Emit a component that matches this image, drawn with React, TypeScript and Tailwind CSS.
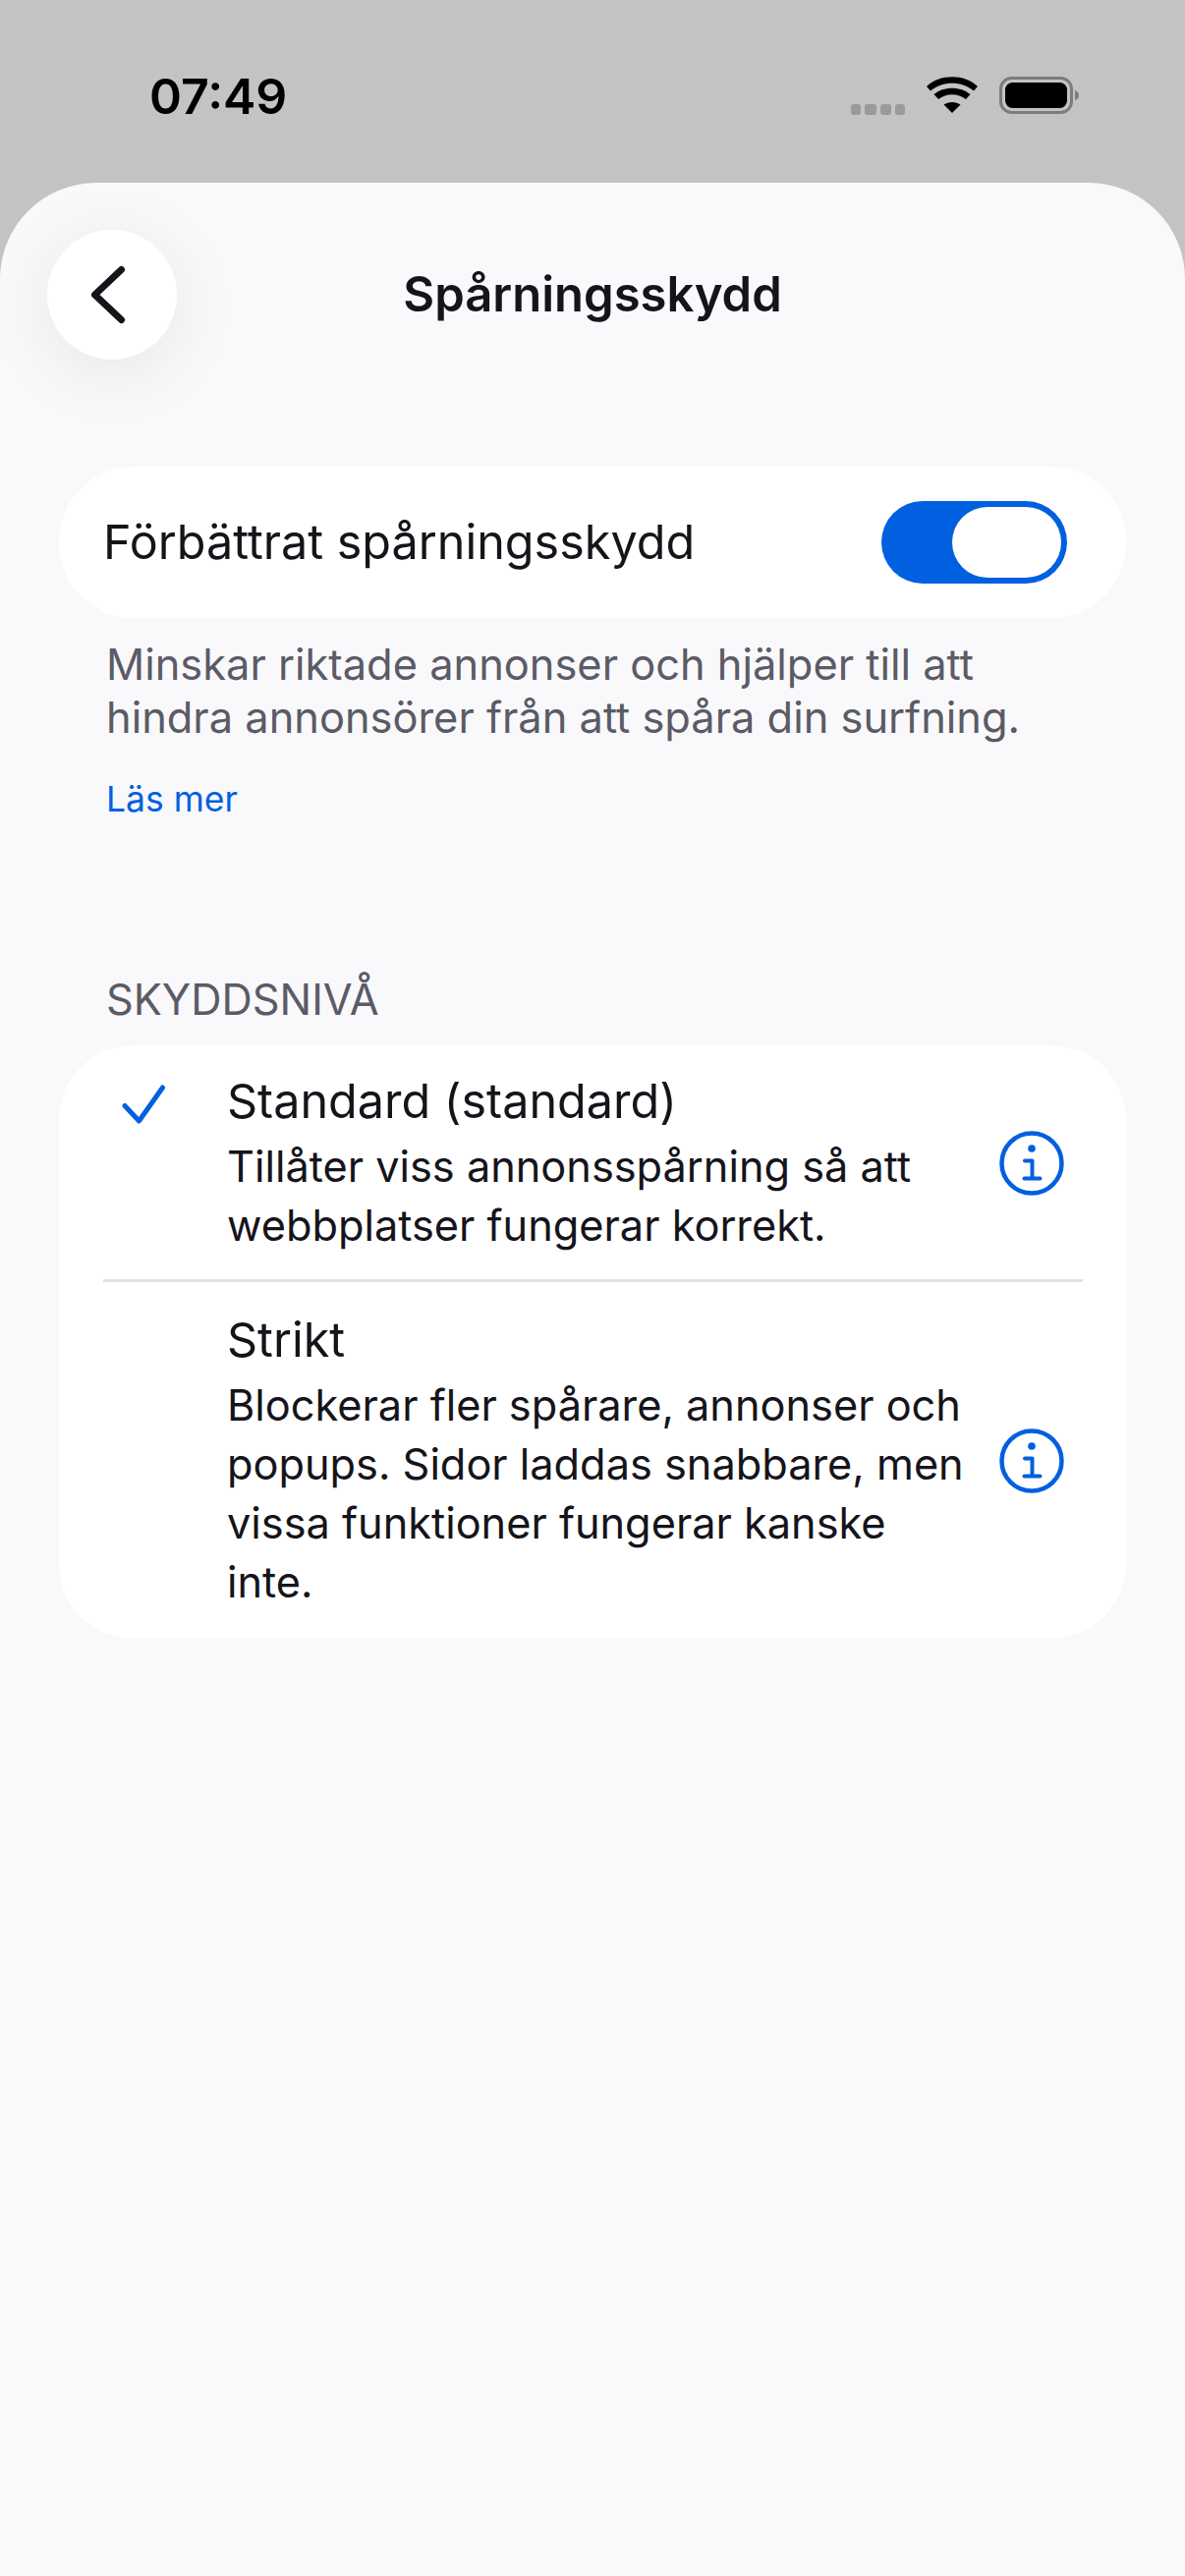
const font = "[font-family:Inter,'Noto_Sans',sans-serif]";

function InfoIcon() {
  return (
    <svg width="66" height="66" viewBox="0 0 66 66" fill="none" className="shrink-0">
      <circle cx="33" cy="33" r="30.5" stroke="#0060df" strokeWidth="4.5" />
      <circle cx="33" cy="18" r="3.8" fill="#0060df" />
      <path d="M26 30.5H33.5V48.5M25.5 48.5H41.5" stroke="#0060df" strokeWidth="4" strokeLinecap="round" strokeLinejoin="round" />
    </svg>
  );
}

function Option({ title, desc, checked }: { title: string; desc: string[]; checked?: boolean }) {
  return (
    <div className="flex items-center pl-[27px] pr-[63px]">
      <div className="w-[144px] shrink-0 self-start">
        {checked && (
          <svg width="46" height="44" viewBox="0 0 46 44" fill="none" className="ml-[37px] mt-[13px]">
            <path d="M3 21.5L17.5 37L41.5 3" stroke="#0060df" strokeWidth="5" strokeLinecap="round" strokeLinejoin="round" />
          </svg>
        )}
      </div>
      <div className="flex-1">
        <div className="text-[48.5px] leading-[60px] text-[#15141a]">{title}</div>
        <div className="text-[43.3px] leading-[60px] text-[#15141a] mt-[6px]">
          {desc.map((l) => (
            <div key={l} className="whitespace-nowrap">{l}</div>
          ))}
        </div>
      </div>
      <InfoIcon />
    </div>
  );
}

export default function App() {
  return (
    <div className={`w-[1206px] h-[2622px] flex flex-col overflow-hidden bg-gradient-to-b from-[#c4c4c6] to-[#b9b9bb] ${font}`}>
      <div className="h-[186px] shrink-0 flex items-start justify-between pl-[152px] pr-[107px]">
        <div className="mt-[68px] text-[50px] leading-[60px] font-semibold text-black">07:49</div>
        <div className="flex items-start mt-[78px]">
          <div className="flex gap-[4px] mt-[28px] mr-[22px]">
            <span className="w-[10px] h-[11px] rounded-[3px] bg-[#9a9a9c]" />
            <span className="w-[12px] h-[11px] rounded-[3px] bg-[#9a9a9c]" />
            <span className="w-[11px] h-[11px] rounded-[3px] bg-[#9a9a9c]" />
            <span className="w-[10px] h-[11px] rounded-[3px] bg-[#9a9a9c]" />
          </div>
          <svg width="52" height="38" viewBox="0 0 52 38" className="mr-[22px]">
            <path d="M26 37L17.5 28.5C22 25 30 25 34.500 28.500Z" fill="#000" />
            <path d="M12 23L7.500 18C17 9.500 35 9.500 44.500 18L40 23C32 16.500 20 16.500 12 23Z" fill="#000" />
            <path d="M4 14.500L0 10C13 -3 39 -3 52 10L48 14.500C36 4 16 4 4 14.500Z" fill="#000" />
          </svg>
          <svg width="82" height="40" viewBox="0 0 82 40">
            <rect x="1.500" y="1.500" width="72" height="35" rx="11" fill="none" stroke="#7c7c7e" strokeWidth="3" />
            <rect x="6" y="6" width="63" height="26" rx="7.500" fill="#000" />
            <path d="M77 14C79.500 15 81 16.500 81 19C81 21.500 79.500 23 77 24Z" fill="#7c7c7e" />
          </svg>
        </div>
      </div>

      <div className="flex-1 bg-[#f9f9fb] rounded-t-[98px]">
        <div className="h-[289px] relative flex items-start justify-center">
          <button className="absolute left-[48px] top-[48px] w-[132px] h-[132px] rounded-full bg-white shadow-[0_12px_70px_rgba(0,0,0,0.08)] flex items-center justify-center">
            <svg width="36" height="60" viewBox="0 0 36 60" fill="none" className="-ml-[8px]">
              <path d="M31.500 4.500L4.500 30L31.500 55.500" stroke="#15141a" strokeWidth="7" strokeLinecap="round" strokeLinejoin="round" />
            </svg>
          </button>
          <div className="mt-[84px] text-[49px] leading-[60px] font-semibold text-[#15141a]">Spårningsskydd</div>
        </div>

        <div className="mx-[60px] h-[154px] bg-white rounded-[76px] flex items-center justify-between pl-[45px] pr-[60px]">
          <div className="text-[48.5px] leading-[60px] text-[#15141a]">Förbättrat spårningsskydd</div>
          <div className="w-[189px] h-[84px] rounded-full bg-[#0060df] flex items-center justify-end pr-[6px]">
            <div className="w-[111px] h-[72px] rounded-full bg-white" />
          </div>
        </div>

        <div className="mx-[108px] mt-[20px] text-[43.4px] leading-[54px] text-[#5b5b66]">
          <div className="whitespace-nowrap">Minskar riktade annonser och hjälper till att</div>
          <div className="whitespace-nowrap">hindra annonsörer från att spåra din surfning.</div>
        </div>
        <div className="mx-[108px] mt-[35px] text-[35.5px] leading-[44px] text-[#0060df]">Läs mer</div>

        <div className="mx-[108px] mt-[156px] text-[43.3px] leading-[50px] text-[#5b5b66]">SKYDDSNIVÅ</div>

        <div className="mx-[60px] mt-[22px] bg-white rounded-[76px] pt-[27px] pb-[28px]">
          <Option checked title="Standard (standard)" desc={["Tillåter viss annonsspårning så att", "webbplatser fungerar korrekt."]} />
          <div className="h-[3px] bg-[#e0e0e6] ml-[45px] mr-[44px] mt-[25px] mb-[29px]" />
          <Option title="Strikt" desc={["Blockerar fler spårare, annonser och", "popups. Sidor laddas snabbare, men", "vissa funktioner fungerar kanske", "inte."]} />
        </div>
      </div>
    </div>
  );
}
